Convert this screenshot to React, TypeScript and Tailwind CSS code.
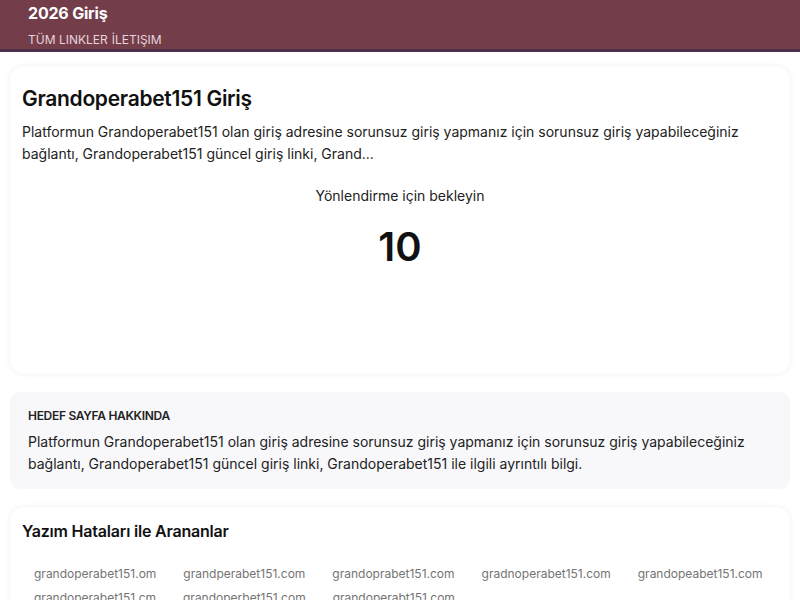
import React from 'react';

const typos = [
  'grandoperabet151.om',
  'grandperabet151.com',
  'grandoprabet151.com',
  'gradnoperabet151.com',
  'grandopeabet151.com',
  'grandoperabet151.cm',
  'grandoperbet151.com',
  'grandoperabt151.com',
];

const font = { fontFamily: 'Inter, "Noto Sans", sans-serif' };

export default function App() {
  return (
    <div className="min-h-screen bg-white text-[#111]" style={font}>
      {/* Header */}
      <header className="bg-[#733d4a] border-b-[3px] border-[#4e2f48] h-[52px] px-[28px] pt-[3px]">
        <div className="text-white font-bold text-[16px] leading-[20px] tracking-[-0.2px]">2026 Giriş</div>
        <nav className="mt-[10px] text-[12px] leading-[14px] text-[#e8d4da] flex gap-[4px]">
          <span>TÜM LINKLER</span>
          <span>İLETIŞIM</span>
        </nav>
      </header>

      <main className="px-[10px] pt-[14px] flex flex-col gap-[18px]">
        {/* Redirect card */}
        <section className="rounded-[14px] bg-white shadow-[0_0_6px_rgba(0,0,0,0.06)] px-[12px] pt-[19px] h-[308px]">
          <h1 className="text-[21px] leading-[28px] font-semibold tracking-[-0.3px]">Grandoperabet151 Giriş</h1>
          <p className="mt-[8px] text-[14px] leading-[22px] text-[#222]">
            Platformun Grandoperabet151 olan giriş adresine sorunsuz giriş yapmanız için sorunsuz giriş yapabileceğiniz bağlantı, Grandoperabet151 güncel giriş linki, Grand...
          </p>
          <div className="mt-[21px] text-center text-[14px] leading-[20px] text-[#222]">Yönlendirme için bekleyin</div>
          <div className="mt-[19px] text-center text-[40px] leading-[44px] font-semibold">10</div>
        </section>

        {/* About box */}
        <section className="rounded-[10px] bg-[#f8f8fb] px-[18px] pt-[16px] pb-[14px]">
          <div className="text-[12px] leading-[16px] font-semibold tracking-[-0.3px] text-[#222]">HEDEF SAYFA HAKKINDA</div>
          <p className="mt-[7px] text-[14px] leading-[22px] text-[#222]">
            Platformun Grandoperabet151 olan giriş adresine sorunsuz giriş yapmanız için sorunsuz giriş yapabileceğiniz bağlantı, Grandoperabet151 güncel giriş linki, Grandoperabet151 ile ilgili ayrıntılı bilgi.
          </p>
        </section>

        {/* Typos card */}
        <section className="rounded-[14px] bg-white shadow-[0_0_6px_rgba(0,0,0,0.06)] px-[12px] pt-[12px] pb-[12px]">
          <h2 className="text-[16px] leading-[24px] font-semibold tracking-[-0.2px]">Yazım Hataları ile Arananlar</h2>
          <div className="mt-[20px] flex flex-wrap gap-x-[3px] gap-y-[2px]">
            {typos.map((t) => (
              <span key={t} className="px-[12px] py-[1px] text-[12px] leading-[20px] text-[#747474]">
                {t}
              </span>
            ))}
          </div>
        </section>
      </main>
    </div>
  );
}
